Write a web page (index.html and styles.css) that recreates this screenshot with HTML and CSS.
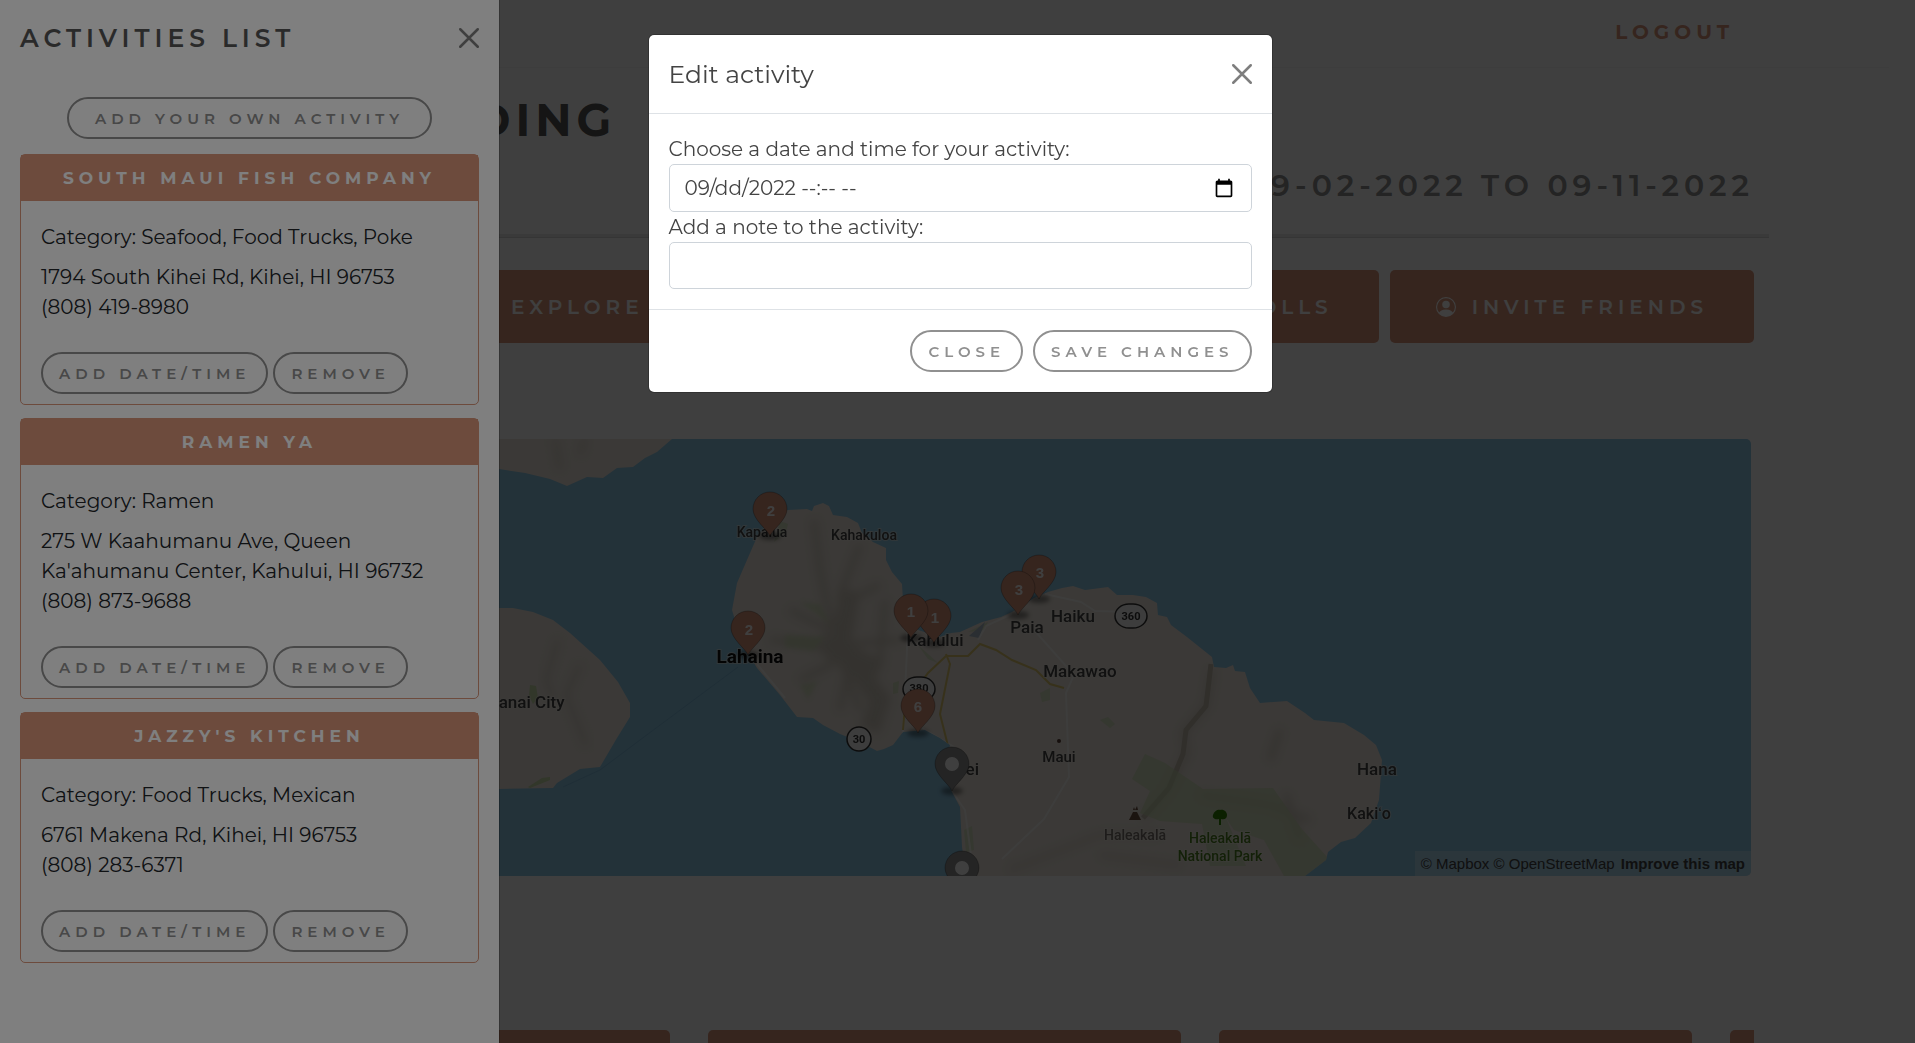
FILE: index.html
```html
<!DOCTYPE html>
<html lang="en">
<head>
<meta charset="utf-8">
<meta name="viewport" content="width=device-width, initial-scale=1">
<title>Wedding trip</title>
<link rel="stylesheet" href="styles.css">
</head>
<body>
<div class="page">
  <header class="navbar"><a class="logout" href="#">Logout</a></header>
  <main class="trip">
    <div class="trip-head">
      <h1 class="trip-title">Mary Wedding</h1>
      <p class="trip-dates">09-02-2022 to 09-11-2022</p>
    </div>
    <hr class="rule">
    <div class="actions">
      <button class="action action-home" type="button">Trip</button>
      <button class="action" type="button">
        <svg class="icon" viewBox="0 0 16 16" aria-hidden="true"><path d="M6.500 12a5.500 5.500 0 1 0 0-11 5.500 5.500 0 0 0 0 11zM11 10l4 4-1 1-4-4z"/></svg>
        <span>Explore</span></button>
      <span class="action action-wide"></span>
      <button class="action" type="button">
        <svg class="icon" viewBox="0 0 16 16" aria-hidden="true"><path d="M1 11h3v4H1zM6 7h3v8H6zM11 2h3v13h-3z"/></svg>
        <span>Polls</span></button>
      <button class="action" type="button">
        <svg class="icon" viewBox="0 0 16 16" aria-hidden="true"><path d="M11 6a3 3 0 1 1-6 0 3 3 0 0 1 6 0z"/><path fill-rule="evenodd" d="M0 8a8 8 0 1 1 16 0A8 8 0 0 1 0 8zm8-7a7 7 0 0 0-5.468 11.370C3.242 11.226 4.805 10 8 10s4.757 1.225 5.468 2.370A7 7 0 0 0 8 1z"/></svg>
        <span>Invite Friends</span></button>
    </div>
    <div class="map">
      <svg class="map-canvas" viewBox="161 439 1590 437" preserveAspectRatio="xMaxYMin slice" role="img" aria-label="Map of Maui">
        <defs>
          <filter id="soft" x="-20%" y="-20%" width="140%" height="140%"><feGaussianBlur stdDeviation="4"/></filter>
          <filter id="shade" x="-50%" y="-100%" width="200%" height="300%"><feGaussianBlur stdDeviation="2"/></filter>
          <g id="pin">
            <ellipse cx="0" cy="44" rx="11" ry="4" fill="#000" opacity=".4" filter="url(#shade)"/>
            <path d="M0 44C-2 38-17 28-17 17A17 17 0 0 1 17 17C17 28 2 38 0 44z" stroke="#000" stroke-opacity=".25"/>
          </g>
          <clipPath id="maui"><path d="M788 510L807 509 812 511 814 506 823 503 829 506 833 515 847 517 858 523 862 533 873 542 886 548 886 560 892 572 902 584 903 600 918 630 940 637 951 633 960 632 982 622 1001 617 1012 612 1034 598 1048 592 1062 588 1073 586 1085 590 1108 587 1117 595 1133 595 1146 597 1157 603 1158 615 1167 617 1171 625 1187 637 1212 657 1214 667 1226 668 1233 665 1235 671 1245 672 1250 688 1260 703 1287 701 1305 713 1314 720 1344 723 1364 735 1376 745 1382 760 1379 800 1371 823 1355 838 1341 842 1328 852 1326 860 1305 876H966L962 847 960 807 951 790 946 762 950 745 940 738 925 730 903 732 893 745 884 749 877 751 860 742 840 734 823 725 813 718 797 717 780 695 757 668 748 653 735 620 732 610 737 583 750 553 757 537 773 517z"/></clipPath>
        </defs>
        <rect x="0" y="439" width="1760" height="437" fill="#8cc8e6"/>
        <g fill="#ece5dc">
          <path d="M380 439H672L657 452 645 458 633 467 617 468 603 478 587 477 567 486 550 479 525 473 499 469 380 450z"/>
          <path d="M400 620L499 608 513 608 533 612 553 620 570 633 600 660 618 682 630 703 630 717 617 738 600 767 580 769 557 783 553 788 499 789 400 790z"/>
          <rect x="700" y="439" width="700" height="437" clip-path="url(#maui)"/>
        </g>
        <path d="M738 667L640 740 600 770 563 787" fill="none" stroke="#7ebada"/>
        <path d="M530 788l20-8 0-3 -8 1-14 9zM530 685l6 1 2 12-5 6-4-8z" fill="#c8dca8"/>
        <g fill="none" stroke="#b8b0a0" stroke-width="4" opacity=".5" filter="url(#soft)">
          <path d="M558 640l-12 40 8 20M580 665l-14 30 20 50M555 439l5 30M585 439l-5 15"/>
        </g>
        <g clip-path="url(#maui)">
          <g fill="none" stroke="#b4ac9c" stroke-width="6" opacity=".45" filter="url(#soft)">
            <path d="M814 520l6 50 12 60M860 545l-20 50 4 50M880 585l-40 20-12 55M770 640l60 5 70-5M790 610l40 20M800 680l40-20 20 50M840 645l35 40M885 600l-5 60M850 660l-10 50"/>
            <path d="M820 640l30 20 30 40 -10 30M850 590l-10 60 40 20" stroke-width="20"/>
            <path d="M1212 670l-6 36-22 26 2 22-18 36-24 28M1200 795l70 10 40 15M1270 760l10-30M1300 840l-14-46"/>
            <path d="M1010 870l90-35 60 0M1100 855l80 10" opacity=".6"/>
          </g>
          <path d="M1211 664l-5 42-20 24-3 24-14 34-26 30" fill="none" stroke="#c4bcae" stroke-width="5"/>
          <g fill="#c9dcae" opacity=".6">
            <path d="M1145 754l20 9 38 26 70-1 28 40 27 30-14 18h-30l-20-36-30-10-8-12 20 48h-36l-8-42-42-3-20-8 10-22-18-12z"/>
            <path d="M785 635l40 2-12 14-28-4zM800 602l20 2 10 20zM800 685l18-4-10 18z" filter="url(#shade)"/>
            <path d="M1040 693l10-5 0 12-8 2zM1100 720l8-3 7 7-5 4zM964 830l8-4 2 24-8 2zM780 521l8 3-2 8-12 10zM893 683l6-2-1 12-5 1z"/>
            <path d="M968 632l20-10-4 8zM918 645l10 14 10 4"/>
          </g>
          <path d="M985 622l-16 14 10 2z" fill="#a8b8c8"/>
          <g fill="none" stroke="#fff" stroke-opacity=".6" stroke-width="2">
            <path d="M757 664l28 34M907 590v60l-4 84M978 640l8-14 26-12M1045 594l36 8 14 9 40 1M1034 630l40 45-8 18 3 84-25 42-42 40M951 790l14 20 8 60M922 728l34 20"/>
          </g>
          <path d="M903 730l2-25 23-32 18-17 22 0 12-12 16 6 16 10 24 10 14 14 14 4M946 654l4 10-10 50 8 32" fill="none" stroke="#dcc66c" stroke-width="2"/>
        </g>
        <g class="map-text">
          <text x="762" y="537" font-size="14">Kapalua</text>
          <text x="864" y="540" font-size="14">Kahakuloa</text>
          <text x="935" y="646" font-size="17">Kahului</text>
          <text x="750" y="663" font-size="19" font-weight="700" fill="#111">Lahaina</text>
          <text x="527" y="708" font-size="17">Lanai City</text>
          <text x="1073" y="622" font-size="17">Haiku</text>
          <text x="1027" y="633" font-size="17">Paia</text>
          <text x="1080" y="677" font-size="17">Makawao</text>
          <text x="1059" y="762" font-size="15">Maui</text>
          <text x="960" y="775" font-size="17">Kihei</text>
          <text x="1377" y="775" font-size="17">Hana</text>
          <text x="1369" y="819" font-size="16">Kakiʻo</text>
          <text x="1135" y="840" font-size="14" fill="#7a736c">Haleakalā</text>
          <text x="1220" y="843" font-size="14" fill="#4c8020">Haleakalā</text>
          <text x="1220" y="861" font-size="14" fill="#4c8020">National Park</text>
        </g>
        <circle cx="1059" cy="741" r="2" fill="#553c34"/>
        <path d="M1129 820l4-8h4l4 8zM1133 810l1-3 1 3 2-4 1 4z" fill="#6c5040"/>
        <path d="M1219 825v-6c-4 1-7-1-6-4 1-4 5-6 7-5 4-1 7 2 7 5 0 4-3 5-6 4v6z" fill="#2c8000"/>
        <g fill="#f4f4f4" stroke="#333" stroke-width="1.500">
          <circle cx="859" cy="739" r="12"/>
          <rect x="1115" y="604" width="32" height="24" rx="14"/>
          <rect x="903" y="677" width="32" height="24" rx="14"/>
        </g>
        <g class="map-shield">
          <text x="859" y="743">30</text><text x="1131" y="620">360</text><text x="919" y="692">380</text>
        </g>
        <g fill="#da967b">
          <use href="#pin" x="770" y="492"/><use href="#pin" x="748" y="611"/>
          <use href="#pin" x="934" y="599"/><use href="#pin" x="911" y="594"/>
          <use href="#pin" x="918" y="689"/>
          <use href="#pin" x="1039" y="555"/><use href="#pin" x="1018" y="571"/>
        </g>
        <g fill="#909090"><use href="#pin" x="952" y="747"/><use href="#pin" x="962" y="851"/></g>
        <g fill="#fff"><circle cx="952" cy="764" r="7"/><circle cx="962" cy="868" r="7"/></g>
        <g class="map-count">
          <text x="771" y="516">2</text><text x="749" y="635">2</text><text x="911" y="617">1</text><text x="935" y="623">1</text>
          <text x="918" y="712">6</text><text x="1040" y="578">3</text><text x="1019" y="595">3</text>
        </g>
      </svg>
      <div class="map-credit"><a href="#">© Mapbox</a> <a href="#">© OpenStreetMap</a> <a class="improve" href="#">Improve this map</a></div>
    </div>
    <div class="cards"><div class="tile"></div><div class="tile"></div><div class="tile"></div><div class="tile"></div></div>
  </main>
</div>
<div class="backdrop"></div>
<aside class="panel" aria-labelledby="list-title">
  <div class="panel-head">
    <h2 class="panel-title" id="list-title">Activities List</h2>
    <button class="close" type="button" aria-label="Close list"><svg viewBox="0 0 16 16"><path d="M1 1l14 14M15 1L1 15"/></svg></button>
  </div>
  <div class="panel-body">
    <button class="pill pill-wide" type="button">Add your own activity</button>
    <article class="card">
      <h3 class="card-title">South Maui Fish Company</h3>
      <div class="card-body">
        <p>Category: Seafood, Food Trucks, Poke</p>
        <p>1794 South Kihei Rd, Kihei, HI 96753<br>(808) 419-8980</p>
        <div class="card-buttons"><button class="pill" type="button">Add date/time</button><button class="pill" type="button">Remove</button></div>
      </div>
    </article>
    <article class="card">
      <h3 class="card-title">Ramen Ya</h3>
      <div class="card-body">
        <p>Category: Ramen</p>
        <p>275 W Kaahumanu Ave, Queen Ka'ahumanu Center, Kahului, HI 96732<br>(808) 873-9688</p>
        <div class="card-buttons"><button class="pill" type="button">Add date/time</button><button class="pill" type="button">Remove</button></div>
      </div>
    </article>
    <article class="card">
      <h3 class="card-title">Jazzy's Kitchen</h3>
      <div class="card-body">
        <p>Category: Food Trucks, Mexican</p>
        <p>6761 Makena Rd, Kihei, HI 96753<br>(808) 283-6371</p>
        <div class="card-buttons"><button class="pill" type="button">Add date/time</button><button class="pill" type="button">Remove</button></div>
      </div>
    </article>
  </div>
</aside>
<div class="backdrop"></div>
<div class="modal">
  <form class="dialog" role="dialog" aria-labelledby="edit-title">
    <div class="dialog-head">
      <h2 class="dialog-title" id="edit-title">Edit activity</h2>
      <button class="close" type="button" aria-label="Close dialog"><svg viewBox="0 0 16 16"><path d="M1 1l14 14M15 1L1 15"/></svg></button>
    </div>
    <div class="dialog-body">
      <label for="when">Choose a date and time for your activity:</label>
      <div class="date-field">
        <input class="field" id="when" type="text" value="09/dd/2022 --:-- --">
        <button class="picker" type="button" aria-label="Open calendar"><svg viewBox="0 0 24 24"><path d="M20 3h-1V1h-2v2H7V1H5v2H4c-1.100 0-2 .900-2 2v16c0 1.100.900 2 2 2h16c1.100 0 2-.900 2-2V5c0-1.100-.900-2-2-2zm0 18H4V8h16v13z"/></svg></button>
      </div>
      <label for="note">Add a note to the activity:</label>
      <input class="field" id="note" type="text">
    </div>
    <div class="dialog-foot">
      <button class="pill" type="button">Close</button>
      <button class="pill" type="button">Save changes</button>
    </div>
  </form>
</div>
</body>
</html>
```
FILE: styles.css
```css
*, *::before, *::after { box-sizing: border-box; }
body {
  margin: 0;
  overflow: hidden;
  font: 400 20px/30px Montserrat, "Liberation Sans", sans-serif;
  color: #212529;
  background: #fff;
}
h1, h2, h3, p { margin: 0; }
button { font-family: inherit; cursor: pointer; }

/* Page */
.page { height: 100vh; overflow: hidden; }
.navbar {
  display: flex;
  justify-content: flex-end;
  margin: 0 26px;
  padding: 17px 155px 20px 0;
  border-bottom: 1px solid #f4f4f4;
}
.logout {
  color: #da967b;
  font-weight: 700;
  letter-spacing: 5px;
  text-transform: uppercase;
  text-decoration: none;
}
.trip { padding: 24px 161px 0; }
.trip-title {
  font-size: 45px;
  line-height: 56px;
  font-weight: 700;
  letter-spacing: 5px;
  text-transform: uppercase;
  color: #555;
}
.trip-dates {
  margin-top: 20px;
  font-size: 30px;
  line-height: 36px;
  font-weight: 600;
  letter-spacing: 5px;
  text-align: right;
  text-transform: uppercase;
  color: #909090;
}
.rule {
  height: 4px;
  margin: 30px -15px 32px;
  border: 0;
  border-bottom: 1px solid #d4d4d4;
  background: #e8e8e8;
}
.actions { display: flex; gap: 11px; }
.action {
  display: flex;
  align-items: center;
  gap: 16px;
  height: 73px;
  padding: 0 46px;
  border: 0;
  border-radius: 5px;
  background: #da967b;
  color: #fff;
  font-size: 20px;
  font-weight: 600;
  letter-spacing: 5px;
  text-transform: uppercase;
}
.action-home { flex: 0 0 257px; }
.action-wide { flex: 1; }
.icon { width: 20px; height: 20px; fill: currentColor; }
.map {
  position: relative;
  margin: 96px 3px 0 0;
  border-radius: 5px;
  overflow: hidden;
}
.map-canvas { display: block; width: 100%; height: 437px; }
.map-text { font-family: Roboto, sans-serif; font-weight: 500; fill: #444; text-anchor: middle; paint-order: stroke; stroke: #f4efe8; stroke-opacity: .5; stroke-width: 2px; }
.map-shield { font: 700 11px Roboto, sans-serif; fill: #333; text-anchor: middle; }
.map-count { font: 700 15px "Liberation Sans", sans-serif; fill: #fff; text-anchor: middle; }
.map-credit {
  position: absolute;
  right: 0;
  bottom: 0;
  padding: 0 6px;
  background: rgba(255, 255, 255, .3);
  font: 15px/25px "Liberation Sans", sans-serif;
}
.map-credit a { color: #404040; text-decoration: none; }
.map-credit .improve { margin-left: 2px; font-weight: 700; }
.cards {
  display: flex;
  gap: 38px;
  margin-top: 154px;
  padding-left: 36px;
  overflow: hidden;
}
.tile { flex: 0 0 473px; height: 300px; border-radius: 5px; background: #da967b; }

.backdrop { position: fixed; inset: 0; background: rgba(0, 0, 0, .5); }

/* Activities panel */
.panel {
  position: fixed;
  inset: 0 auto 0 0;
  width: 500px;
  max-width: 100%;
  padding: 0 20px;
  border-right: 1px solid rgba(0, 0, 0, .2);
  background: #fff;
  background-clip: padding-box;
}
.panel-head {
  display: flex;
  align-items: center;
  justify-content: space-between;
  padding: 23px 0 20px;
}
.panel-title {
  font-size: 25px;
  line-height: 30px;
  font-weight: 600;
  letter-spacing: 5px;
  text-transform: uppercase;
  color: #555;
}
.close { display: block; width: 20px; height: 20px; padding: 0; border: 0; background: none; opacity: .5; }
.close svg { display: block; fill: none; stroke: #000; stroke-width: 2; stroke-linecap: round; }
.panel-body { display: flex; flex-direction: column; gap: 13px; padding-top: 24px; }
.pill {
  height: 42px;
  padding: 0 16px;
  border: 2px solid #909090;
  border-radius: 21px;
  background: transparent;
  color: #909090;
  font-size: 15px;
  font-weight: 600;
  letter-spacing: 5px;
  text-transform: uppercase;
  white-space: nowrap;
}
.pill-wide { align-self: center; margin-bottom: 2px; padding: 0 26px; }
.card { border: 1px solid #da967b; border-radius: 5px; }
.card-title {
  padding: 8px 16px;
  background: #da967b;
  color: #fff;
  font-size: 17px;
  line-height: 30px;
  font-weight: 700;
  letter-spacing: 5px;
  text-align: center;
  text-transform: uppercase;
}
.card-body { display: flex; flex-direction: column; gap: 10px; padding: 21px 20px 10px; }
.card-buttons { display: flex; gap: 5px; margin-top: 20px; }

/* Edit dialog */
.modal { position: fixed; inset: 0; display: flex; justify-content: center; align-items: flex-start; padding: 34px 0 0 5px; }
.dialog {
  flex: 0 1 625px;
  border: 1px solid rgba(0, 0, 0, .2);
  border-radius: 6px;
  background: #fff;
  background-clip: padding-box;
  color: #444;
}
.dialog-head {
  display: flex;
  align-items: center;
  justify-content: space-between;
  padding: 20px;
  border-bottom: 1px solid #dee2e6;
}
.dialog-title { font-size: 25px; line-height: 38px; font-weight: 400; }
.dialog-body { display: flex; flex-direction: column; padding: 20px; }
.date-field { position: relative; }
.field {
  display: block;
  width: 100%;
  height: 47px;
  padding: 0 15px;
  border: 1px solid #ced4da;
  border-radius: 5px;
  background: #fff;
  color: #444;
  font: inherit;
}
.date-field .field { height: 48px; }
.picker { position: absolute; right: 18px; top: 14px; width: 20px; height: 20px; padding: 0; border: 0; background: none; }
.picker svg { display: block; }
.dialog-foot {
  display: flex;
  justify-content: flex-end;
  gap: 10px;
  padding: 20px;
  border-top: 1px solid #dee2e6;
}
```
